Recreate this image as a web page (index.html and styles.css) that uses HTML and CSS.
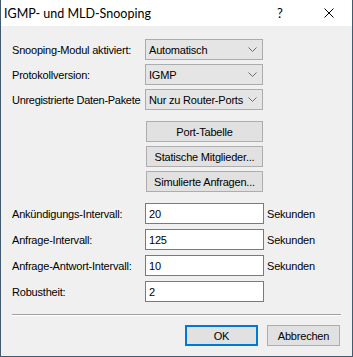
FILE: index.html
```html
<!DOCTYPE html>
<html lang="de">
<head>
    <meta charset="UTF-8">
    <title>IGMP- und MLD-Snooping</title>
    <link rel="stylesheet" href="styles.css">
</head>
<body>

    <div class="window">
        <!-- Title bar -->
        <div class="titlebar">
            <span class="title">IGMP- und MLD-Snooping</span>
            <span class="help">?</span>
            <span class="close">
                <svg width="10" height="10" viewBox="0 0 10 10"><path d="M0.5 0.5 L9.5 9.5 M9.5 0.5 L0.5 9.5" stroke="#000" stroke-width="1"/></svg>
            </span>
        </div>

        <div class="content">
            <!-- Dropdowns -->
            <div class="section">
                <div class="row">
                    <label>Snooping-Modul aktiviert:</label>
                    <div class="combo"><span class="value">Automatisch</span><svg class="chev" width="9" height="5" viewBox="0 0 9 5"><path d="M0.5 0.5 L4.5 4.5 L8.5 0.5" fill="none" stroke="#6d6d6d"/></svg></div>
                </div>
                <div class="row">
                    <label>Protokollversion:</label>
                    <div class="combo"><span class="value">IGMP</span><svg class="chev" width="9" height="5" viewBox="0 0 9 5"><path d="M0.5 0.5 L4.5 4.5 L8.5 0.5" fill="none" stroke="#6d6d6d"/></svg></div>
                </div>
                <div class="row">
                    <label class="wide">Unregistrierte Daten-Pakete</label>
                    <div class="combo"><span class="value">Nur zu Router-Ports</span><svg class="chev" width="9" height="5" viewBox="0 0 9 5"><path d="M0.5 0.5 L4.5 4.5 L8.5 0.5" fill="none" stroke="#6d6d6d"/></svg></div>
                </div>
            </div>

            <!-- Action buttons -->
            <div class="section buttons">
                <button class="btn wide-btn">Port-Tabelle</button>
                <button class="btn wide-btn">Statische Mitglieder...</button>
                <button class="btn wide-btn">Simulierte Anfragen...</button>
            </div>

            <!-- Intervals -->
            <div class="section inputs">
                <div class="row">
                    <label>Ank&uuml;ndigungs-Intervall:</label>
                    <div class="field">20</div>
                    <span class="unit">Sekunden</span>
                </div>
                <div class="row">
                    <label>Anfrage-Intervall:</label>
                    <div class="field">125</div>
                    <span class="unit">Sekunden</span>
                </div>
                <div class="row">
                    <label>Anfrage-Antwort-Intervall:</label>
                    <div class="field">10</div>
                    <span class="unit">Sekunden</span>
                </div>
                <div class="row">
                    <label>Robustheit:</label>
                    <div class="field">2</div>
                </div>
            </div>

            <div class="separator"></div>

            <div class="footer">
                <button class="btn dialog-btn default">OK</button>
                <button class="btn dialog-btn">Abbrechen</button>
            </div>
        </div>
    </div>

</body>
</html>
```

FILE: styles.css
```css
/* Reset and base styles */
* {
    box-sizing: border-box;
    margin: 0;
    padding: 0;
}
body {
    font-family: "Liberation Sans", Arial, sans-serif;
    font-size: 11px;
    letter-spacing: -0.2px;
    color: #000;
    background: #f0f0f0;
}
/* Dialog window */
.window {
    width: 353px;
    height: 357px;
    background: #f0f0f0;
    border: 1px solid #43596f;
    border-top: none;
    display: flex;
    flex-direction: column;
}
.titlebar {
    height: 26px;
    background: #ffffff;
    display: flex;
    align-items: center;
    font-family: Lato, "Noto Sans", sans-serif;
    font-size: 12.5px;
    letter-spacing: 0;
}
.title {
    padding-left: 3px;
    flex: 1;
}
.help {
    width: 10px;
    margin-right: 37px;
    font-size: 13px;
}
.close {
    width: 10px;
    height: 10px;
    margin-right: 18px;
    display: flex;
}
/* Form content */
.content {
    padding: 13px 11px 0 11px;
    display: flex;
    flex-direction: column;
}
.section {
    display: flex;
    flex-direction: column;
    gap: 4px;
}
.row {
    display: flex;
    align-items: center;
    height: 21px;
}
label {
    width: 133px;
    flex-shrink: 0;
}
label.wide {
    white-space: nowrap;
    letter-spacing: -0.3px;
}
.combo {
    width: 118px;
    height: 21px;
    background: #e5e5e5;
    border: 1px solid #acacac;
    display: flex;
    align-items: center;
    padding-left: 3px;
}
.combo .value {
    flex: 1;
    white-space: nowrap;
}
.chev {
    margin: 0 5px 0 4px;
}
/* Buttons */
.buttons {
    margin-top: 11px;
    padding-left: 134px;
}
.btn {
    font-family: "Liberation Sans", Arial, sans-serif;
    font-size: 11px;
    letter-spacing: -0.2px;
    color: #000;
    background: #e1e1e1;
    border: 1px solid #adadad;
    height: 21px;
}
.wide-btn {
    width: 117px;
}
/* Inputs */
.inputs {
    margin-top: 11px;
    gap: 5px;
}
.field {
    width: 119px;
    height: 21px;
    background: #ffffff;
    border: 1px solid #7a7a7a;
    padding-left: 3px;
    display: flex;
    align-items: center;
}
.unit {
    margin-left: 3px;
}
.separator {
    margin-top: 12px;
    height: 2px;
    background: #a0a0a0;
    border-bottom: 1px solid #ffffff;
}
/* Footer */
.footer {
    margin-top: 9px;
    display: flex;
    justify-content: flex-end;
    gap: 9px;
    padding-right: 1px;
}
.dialog-btn {
    width: 73px;
    height: 21px;
}
.dialog-btn.default {
    border: 2px solid #0078d7;
}
```
